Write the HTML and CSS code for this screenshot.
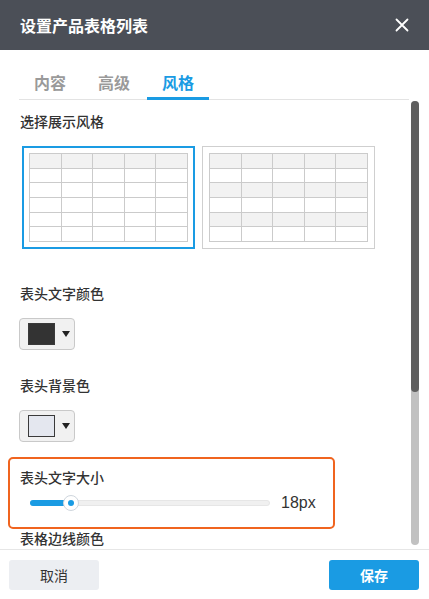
FILE: index.html
```html
<!DOCTYPE html>
<html lang="zh-CN">
<head>
<meta charset="utf-8">
<title>设置产品表格列表</title>
<link rel="stylesheet" href="styles.css">
</head>
<body>
<div class="dialog">
  <div class="header">
    <div class="title">设置产品表格列表</div>
    <svg class="close" width="14" height="14" viewBox="0 0 14 14"><path d="M1.5 1.5 L12.5 12.5 M12.5 1.5 L1.5 12.5" stroke="#fff" stroke-width="1.8" stroke-linecap="round"/></svg>
  </div>
  <div class="tabs">
    <div class="tab">内容</div>
    <div class="tab">高级</div>
    <div class="tab active">风格</div>
  </div>
  <div class="body">
    <div class="content">
      <div class="field">
        <div class="label">选择展示风格</div>
        <div class="styles">
          <div class="card selected">
            <table class="grid">
              <tr class="head"><td></td><td></td><td></td><td></td><td></td></tr>
              <tr><td></td><td></td><td></td><td></td><td></td></tr>
              <tr><td></td><td></td><td></td><td></td><td></td></tr>
              <tr><td></td><td></td><td></td><td></td><td></td></tr>
              <tr><td></td><td></td><td></td><td></td><td></td></tr>
              <tr><td></td><td></td><td></td><td></td><td></td></tr>
            </table>
          </div>
          <div class="card">
            <table class="grid">
              <tr class="head"><td></td><td></td><td></td><td></td><td></td></tr>
              <tr><td></td><td></td><td></td><td></td><td></td></tr>
              <tr class="head"><td></td><td></td><td></td><td></td><td></td></tr>
              <tr><td></td><td></td><td></td><td></td><td></td></tr>
              <tr class="head"><td></td><td></td><td></td><td></td><td></td></tr>
              <tr><td></td><td></td><td></td><td></td><td></td></tr>
            </table>
          </div>
        </div>
      </div>
      <div class="field field-color">
        <div class="label">表头文字颜色</div>
        <div class="picker"><span class="swatch swatch-dark"></span><span class="caret"></span></div>
      </div>
      <div class="field field-color2">
        <div class="label">表头背景色</div>
        <div class="picker"><span class="swatch swatch-light"></span><span class="caret"></span></div>
      </div>
      <div class="field highlight">
        <div class="label">表头文字大小</div>
        <div class="slider-row">
          <div class="slider">
            <div class="fill"></div>
            <div class="thumb"><span class="dot"></span></div>
          </div>
          <div class="value">18px</div>
        </div>
      </div>
      <div class="field">
        <div class="label">表格边线颜色</div>
      </div>
    </div>
    <div class="scrollbar"><div class="thumb-bar"></div></div>
  </div>
  <div class="footer">
    <div class="btn btn-cancel">取消</div>
    <div class="btn btn-save">保存</div>
  </div>
</div>
</body>
</html>
```
FILE: styles.css
```css
html, body {
  margin: 0;
  padding: 0;
  background: #fff;
}
body {
  font-family: "Noto Sans CJK SC", "Noto Sans", sans-serif;
  color: #333;
}
.dialog {
  width: 429px;
  height: 599px;
  display: flex;
  flex-direction: column;
  overflow: hidden;
  background: #fff;
}
.header {
  height: 50px;
  flex: none;
  background: #4b4f57;
  display: flex;
  align-items: center;
  justify-content: space-between;
  padding: 0 20px 0 20px;
  box-sizing: border-box;
}
.title {
  color: #fff;
  font-size: 16px;
  font-weight: 700;
  line-height: 20px;
}
.close {
  display: block;
  margin-right: 0;
}
.tabs {
  height: 50px;
  flex: none;
  box-sizing: border-box;
  margin: 0 20px 0 19px;
  border-bottom: 1px solid #e3e3e3;
  display: flex;
  align-items: flex-end;
  gap: 2px;
}
.tab {
  width: 62px;
  text-align: center;
  font-size: 16px;
  font-weight: 700;
  color: #9a9a9a;
  line-height: 20px;
  padding-bottom: 5px;
  margin-bottom: -1px;
  border-bottom: 3px solid transparent;
}
.tab.active {
  color: #1a9be3;
  border-bottom-color: #1a9be3;
}
.body {
  flex: 1;
  min-height: 0;
  display: flex;
  border-bottom: 1px solid #e6e6e6;
}
.content {
  flex: 1;
  min-width: 0;
  overflow: hidden;
  padding: 12px 0 0 8px;
}
.field {
  padding: 0 12px;
  width: 327px;
  box-sizing: border-box;
}
.label {
  font-size: 14px;
  font-weight: 500;
  line-height: 18px;
  color: #333;
}
.styles {
  display: flex;
  gap: 7px;
  margin-top: 16px;
  margin-left: 2px;
}
.card {
  width: 173px;
  height: 103px;
  box-sizing: border-box;
  border: 1px solid #cfcfcf;
  padding: 6px;
  flex: none;
}
.card.selected {
  border: 2px solid #1a9be3;
  padding: 5px;
}
.grid {
  width: 159px;
  height: 89px;
  border-collapse: collapse;
  table-layout: fixed;
}
.grid td {
  border: 1px solid #cbcbcb;
  padding: 0;
}
.grid tr.head td {
  background: #f2f2f2;
}
.field-color {
  margin-top: 35px;
}
.field-color2 {
  margin-top: 26px;
}
.picker {
  margin-top: 16px;
  margin-left: -1px;
  width: 56px;
  height: 32px;
  box-sizing: border-box;
  border: 1px solid #c9c9c9;
  border-radius: 4px;
  background: #f1f1f1;
  display: flex;
  align-items: center;
  padding-left: 8px;
  gap: 7px;
}
.swatch {
  width: 27px;
  height: 22px;
  box-sizing: border-box;
  border: 1px solid #3a3a3a;
}
.swatch-dark {
  background: #333333;
}
.swatch-light {
  background: #e4e7ef;
}
.caret {
  width: 0;
  height: 0;
  border-left: 4px solid transparent;
  border-right: 4px solid transparent;
  border-top: 6px solid #222;
}
.highlight {
  margin-top: 15px;
  border: 2px solid #f0641f;
  border-radius: 5px;
  padding: 9px 10px 0 10px;
  height: 72px;
}
.slider-row {
  display: flex;
  align-items: center;
  margin-top: 8px;
}
.slider {
  position: relative;
  margin-left: 10px;
  width: 240px;
  height: 6px;
  box-sizing: border-box;
  border-radius: 3px;
  background: #f0f0f0;
  border: 1px solid #e6e6e6;
}
.fill {
  width: 38px;
  height: 6px;
  margin: -1px 0 0 -1px;
  border-radius: 3px 0 0 3px;
  background: #1a9be3;
}
.thumb {
  position: absolute;
  left: 32px;
  top: -6px;
  width: 16px;
  height: 16px;
  box-sizing: border-box;
  border-radius: 50%;
  background: #fff;
  border: 1px solid #cfd6dd;
  display: flex;
  align-items: center;
  justify-content: center;
}
.dot {
  width: 6px;
  height: 6px;
  border-radius: 50%;
  background: #1a9be3;
}
.value {
  margin-left: 11px;
  font-family: "Liberation Sans", Arial, sans-serif;
  font-size: 16px;
  color: #333;
}
.scrollbar {
  flex: none;
  width: 8px;
  margin: 1px 10px 4px 2px;
  border-radius: 4px;
  background: #c1c1c1;
}
.thumb-bar {
  height: 291px;
  border-radius: 4px;
  background: #5f5f5f;
}
.footer {
  height: 49px;
  flex: none;
  display: flex;
  justify-content: space-between;
  align-items: flex-start;
  padding: 10px 10px 0 9px;
  box-sizing: border-box;
}
.btn {
  width: 90px;
  height: 30px;
  border-radius: 3px;
  display: flex;
  align-items: center;
  justify-content: center;
  font-size: 14px;
}
.btn-cancel {
  background: #eceef2;
  color: #333;
}
.btn-save {
  background: #1a9be3;
  color: #fff;
  font-weight: 700;
}
```
